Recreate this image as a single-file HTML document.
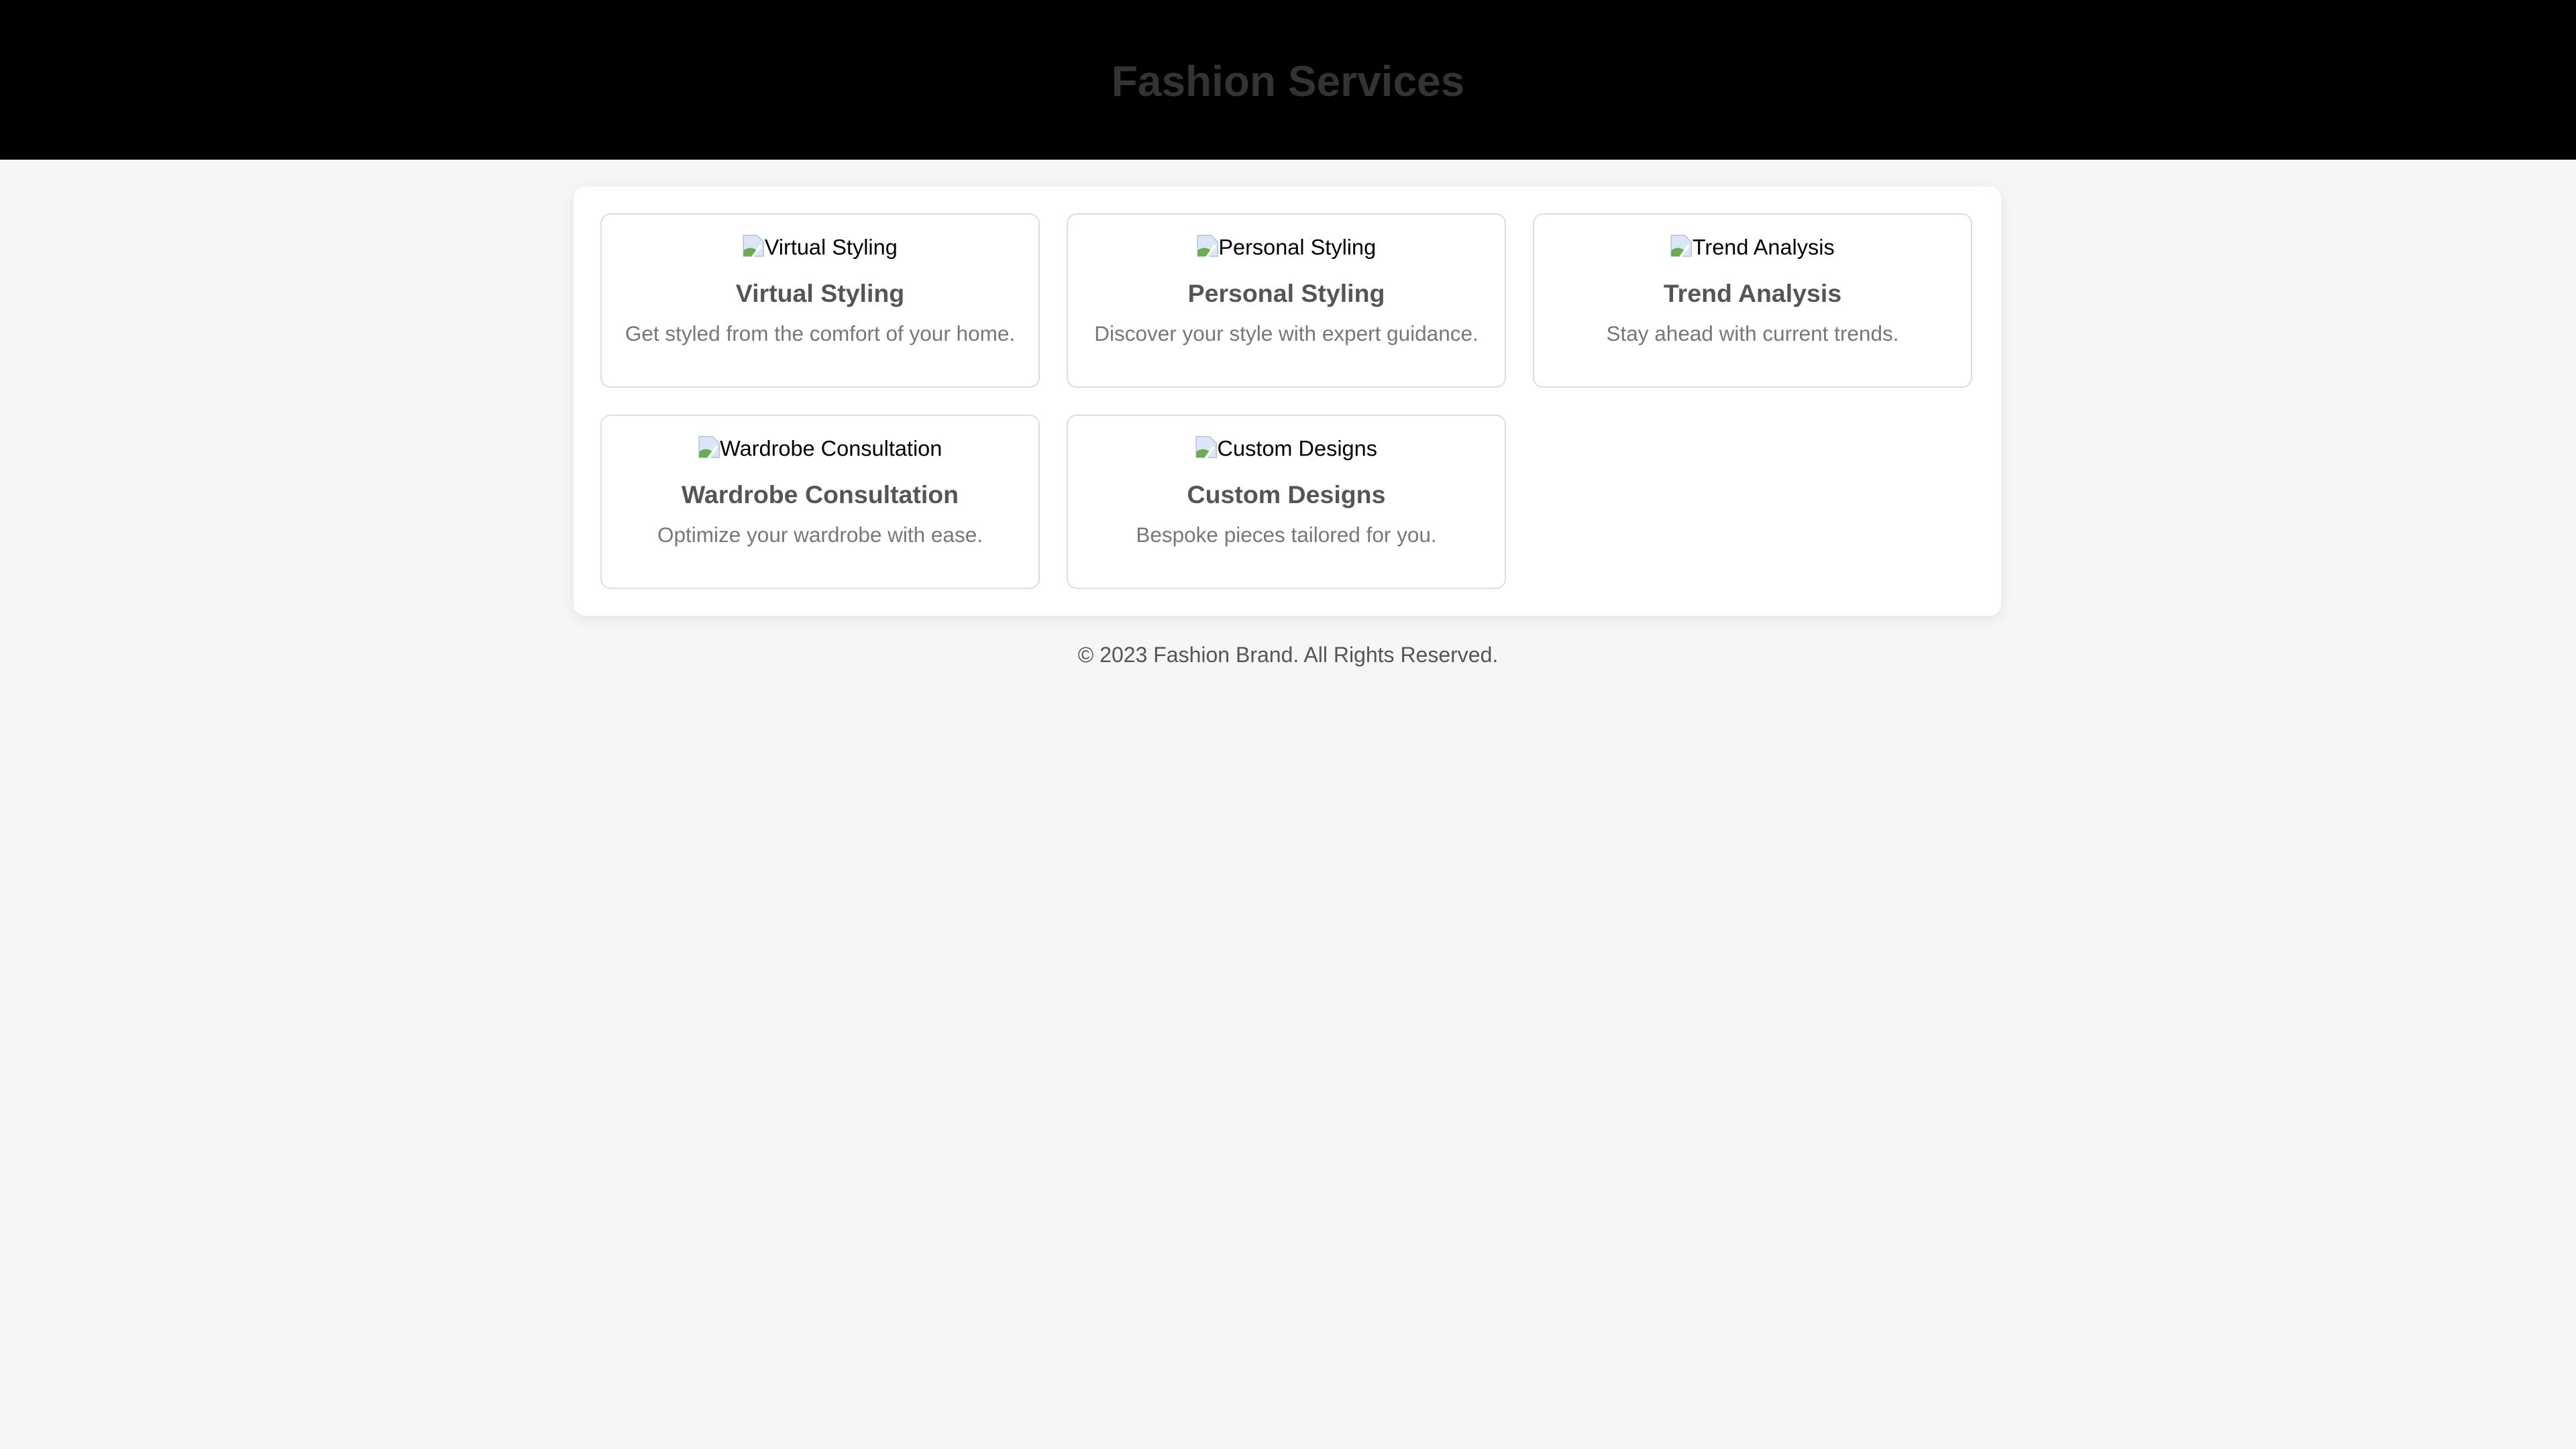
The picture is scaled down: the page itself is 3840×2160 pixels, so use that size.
<!DOCTYPE html>
<html><head><meta charset="utf-8">
<style>
html,body{margin:0;padding:0;}
body{background:#f6f6f6;font-family:"Liberation Sans",Arial,sans-serif;width:3840px;height:2160px;overflow:hidden;}
.wrap{zoom:2.5;width:1536px;}
header{background:#000;height:95px;text-align:center;}
header h1{margin:0;color:#333;font-size:25.6px;font-weight:bold;line-height:97px;}
.container{margin:16px 0 0 342px;width:851px;height:256px;box-sizing:border-box;background:#fff;border-radius:7px;box-shadow:0 2px 8px rgba(0,0,0,0.08);padding:16px;display:grid;grid-template-columns:repeat(3,262px);gap:16px;grid-auto-rows:104px;}
.card{border:1px solid #ddd;border-radius:6px;text-align:center;box-sizing:border-box;height:104px;padding-top:11px;}
.alt{font-size:13px;line-height:16px;color:#000;height:16px;}
.alt svg{width:13px;height:15px;vertical-align:-2px;}
.card h3{margin:11px 0 0;font-size:15px;line-height:18px;color:#555;}
.card p{margin:7px 0 0;font-size:12.6px;line-height:16px;color:#777;}
footer{text-align:center;font-size:12.8px;color:#555;margin-top:16px;width:1536px;}
</style></head><body>
<div class="wrap">
<header><h1>Fashion Services</h1></header>
<div class="container">
<div class="card"><div class="alt"><svg viewBox="0 0 13 15"><path d="M0.5 1.5h8l4 4v8.5h-12z" fill="#dbe6f7" stroke="#b5c2d6" stroke-width="0.6"/><path d="M0.5 14v-3.5q4-3 8 0l-3 3.5z" fill="#6aad4d"/><path d="M6 14.5l5-7" stroke="#fff" stroke-width="1.5"/></svg>Virtual Styling</div><h3>Virtual Styling</h3><p>Get styled from the comfort of your home.</p></div>
<div class="card"><div class="alt"><svg viewBox="0 0 13 15"><path d="M0.5 1.5h8l4 4v8.5h-12z" fill="#dbe6f7" stroke="#b5c2d6" stroke-width="0.6"/><path d="M0.5 14v-3.5q4-3 8 0l-3 3.5z" fill="#6aad4d"/><path d="M6 14.5l5-7" stroke="#fff" stroke-width="1.5"/></svg>Personal Styling</div><h3>Personal Styling</h3><p>Discover your style with expert guidance.</p></div>
<div class="card"><div class="alt"><svg viewBox="0 0 13 15"><path d="M0.5 1.5h8l4 4v8.5h-12z" fill="#dbe6f7" stroke="#b5c2d6" stroke-width="0.6"/><path d="M0.5 14v-3.5q4-3 8 0l-3 3.5z" fill="#6aad4d"/><path d="M6 14.5l5-7" stroke="#fff" stroke-width="1.5"/></svg>Trend Analysis</div><h3>Trend Analysis</h3><p>Stay ahead with current trends.</p></div>
<div class="card"><div class="alt"><svg viewBox="0 0 13 15"><path d="M0.5 1.5h8l4 4v8.5h-12z" fill="#dbe6f7" stroke="#b5c2d6" stroke-width="0.6"/><path d="M0.5 14v-3.5q4-3 8 0l-3 3.5z" fill="#6aad4d"/><path d="M6 14.5l5-7" stroke="#fff" stroke-width="1.5"/></svg>Wardrobe Consultation</div><h3>Wardrobe Consultation</h3><p>Optimize your wardrobe with ease.</p></div>
<div class="card"><div class="alt"><svg viewBox="0 0 13 15"><path d="M0.5 1.5h8l4 4v8.5h-12z" fill="#dbe6f7" stroke="#b5c2d6" stroke-width="0.6"/><path d="M0.5 14v-3.5q4-3 8 0l-3 3.5z" fill="#6aad4d"/><path d="M6 14.5l5-7" stroke="#fff" stroke-width="1.5"/></svg>Custom Designs</div><h3>Custom Designs</h3><p>Bespoke pieces tailored for you.</p></div>
</div>
<footer>© 2023 Fashion Brand. All Rights Reserved.</footer>
</div>
</body></html>
